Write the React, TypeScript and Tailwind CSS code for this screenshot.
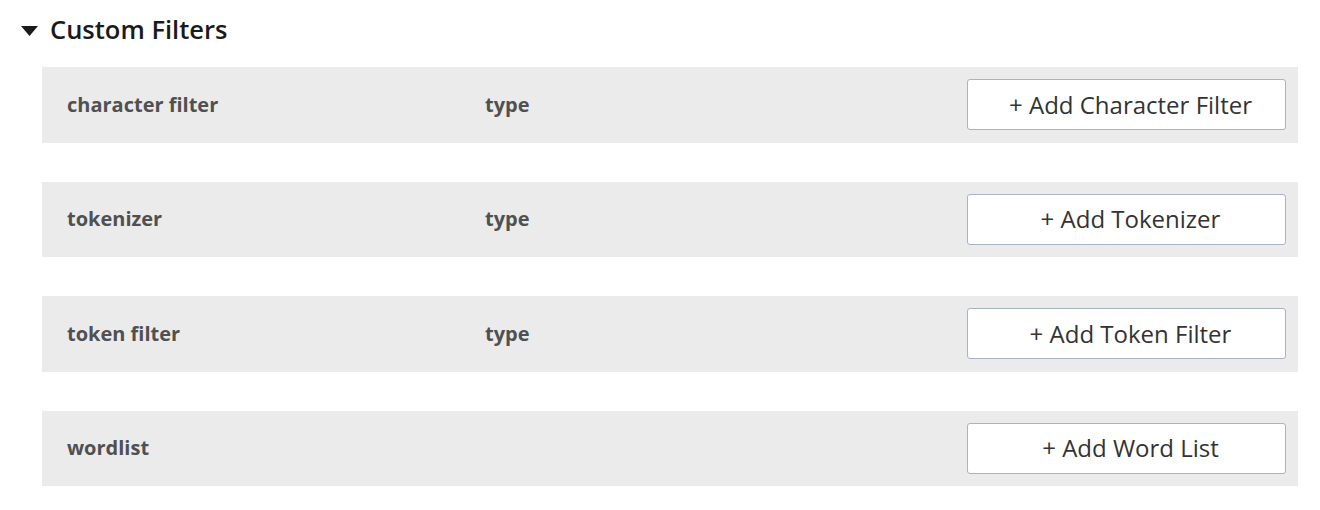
import React from "react";

const rows = [
  { name: "character filter", type: true, btn: "+ Add Character Filter" },
  { name: "tokenizer", type: true, btn: "+ Add Tokenizer" },
  { name: "token filter", type: true, btn: "+ Add Token Filter" },
  { name: "wordlist", type: false, btn: "+ Add Word List" },
];

export default function App() {
  return (
    <div
      className="w-[1320px] h-[510px] bg-white"
      style={{ fontFamily: '"Open Sans", "Noto Sans", sans-serif' }}
    >
      <div className="flex items-center pl-[21px] pt-[14px] h-[46px]">
        <svg width="17" height="10" viewBox="0 0 17 10" className="mr-[12px] mt-[1px]">
          <polygon points="0,0 17,0 8.5,10" fill="#1a1a1a" />
        </svg>
        <span className="text-[25.5px] font-semibold text-[#1a1a1a] leading-none">Custom Filters</span>
      </div>
      <div className="flex flex-col gap-[39px] ml-[42px] mt-[21px] w-[1256px]">
        {rows.map((r) => (
          <div key={r.name} className="h-[75.5px] bg-[#ebebeb] flex items-center pl-[25px] pr-[12px]">
            <div className="w-[418px] text-[20px] font-bold text-[#505050]">{r.name}</div>
            <div className="flex-1 text-[20px] font-bold text-[#505050]">{r.type ? "type" : ""}</div>
            <button className="w-[319px] h-[51px] bg-white border border-[#a8b4c3] rounded-[3px] text-[24px] text-[#333] flex items-center justify-center pl-[8px]">
              {r.btn}
            </button>
          </div>
        ))}
      </div>
    </div>
  );
}
